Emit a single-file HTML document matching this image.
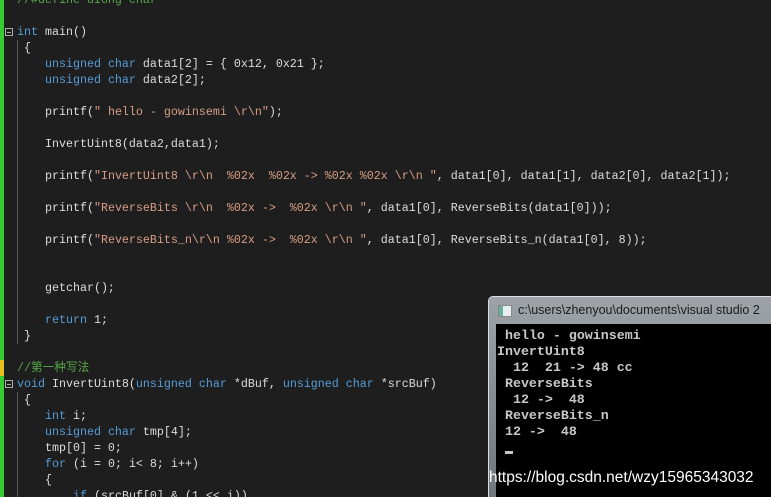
<!DOCTYPE html>
<html style="width:771px;height:497px;overflow:hidden"><head><meta charset="utf-8"><style>
html,body{overflow:hidden}
body{margin:0;width:771px;height:497px;overflow:hidden;background:#1e1e1e;position:relative;font-family:"Liberation Mono","Noto Sans CJK SC",monospace}
.l{position:absolute;left:17px;height:16px;line-height:16px;font-size:11.67px;color:#dcdcdc;white-space:pre}
.k{color:#569cd6}.s{color:#d69d85}.c{color:#57a64a}
#bar{position:absolute;left:0;top:0;width:4px;height:497px;background:#33cc33}
#guide{position:absolute;left:17px;top:40px;width:1px;height:304px;background:#555}
#guide2{position:absolute;left:17px;top:392px;width:1px;height:105px;background:#555}
.fold{position:absolute;left:5px;width:8px;height:8px;border:1px solid #aaa;box-sizing:border-box}
.fold:after{content:"";position:absolute;left:1px;top:3px;width:4px;height:1px;background:#aaa}
#con{position:absolute;left:488px;top:296px;width:283px;height:201px;background:linear-gradient(#9ea3a8,#6f767c);border:1px solid #ddd;border-right:0;border-bottom:0;border-radius:5px 0 0 0;box-sizing:border-box}
#title{position:absolute;left:518px;top:303px;font-family:"Liberation Sans",sans-serif;font-size:12.5px;color:#1a1a1a;white-space:nowrap}
#ic{position:absolute;left:498px;top:305px;width:12px;height:10px;background:#e8eef0;border:1px solid #888}
#ic:before{content:"";position:absolute;left:0;top:0;width:4px;height:10px;background:#6ab0a0}
#blk{position:absolute;left:496px;top:324px;width:275px;height:173px;background:#000}
.t{position:absolute;height:16px;line-height:16px;font-size:13.3px;font-weight:bold;color:#c8c8c8;white-space:pre}
#wm{position:absolute;left:489px;top:469px;font-family:"Liberation Sans",sans-serif;font-size:15.5px;color:#fff;white-space:nowrap}
</style></head><body>
<div id="bar"></div>
<div style="position:absolute;left:0;top:360px;width:4px;height:16px;background:#e8c020"></div>
<div id="guide"></div><div id="guide2"></div>
<div class="fold" style="top:28px"></div>
<div class="fold" style="top:380px"></div>
<div class="l c" style="top:-8px">//#define uIong char</div>
<div class="l" style="top:24px"><span class="k">int</span> main()</div>
<div class="l" style="top:40px"> {</div>
<div class="l" style="top:56px">    <span class="k">unsigned char</span> data1[2] = { 0x12, 0x21 };</div>
<div class="l" style="top:72px">    <span class="k">unsigned char</span> data2[2];</div>
<div class="l" style="top:104px">    printf(<span class="s">" hello - gowinsemi \r\n"</span>);</div>
<div class="l" style="top:136px">    InvertUint8(data2,data1);</div>
<div class="l" style="top:168px">    printf(<span class="s">"InvertUint8 \r\n  %02x  %02x -> %02x %02x \r\n "</span>, data1[0], data1[1], data2[0], data2[1]);</div>
<div class="l" style="top:200px">    printf(<span class="s">"ReverseBits \r\n  %02x ->  %02x \r\n "</span>, data1[0], ReverseBits(data1[0]));</div>
<div class="l" style="top:232px">    printf(<span class="s">"ReverseBits_n\r\n %02x ->  %02x \r\n "</span>, data1[0], ReverseBits_n(data1[0], 8));</div>
<div class="l" style="top:280px">    getchar();</div>
<div class="l" style="top:312px">    <span class="k">return</span> 1;</div>
<div class="l" style="top:328px"> }</div>
<div class="l c" style="top:360px">//第一种写法</div>
<div class="l" style="top:376px"><span class="k">void</span> InvertUint8(<span class="k">unsigned char</span> *dBuf, <span class="k">unsigned char</span> *srcBuf)</div>
<div class="l" style="top:392px"> {</div>
<div class="l" style="top:408px">    <span class="k">int</span> i;</div>
<div class="l" style="top:424px">    <span class="k">unsigned char</span> tmp[4];</div>
<div class="l" style="top:440px">    tmp[0] = 0;</div>
<div class="l" style="top:456px">    <span class="k">for</span> (i = 0; i&lt; 8; i++)</div>
<div class="l" style="top:472px">    {</div>
<div class="l" style="top:488px">        <span class="k">if</span> (srcBuf[0] &amp; (1 &lt;&lt; i))</div>
<div id="con"></div>
<div id="ic"></div>
<div id="title">c:\users\zhenyou\documents\visual studio 2</div>
<div id="blk"></div>
<div class="t" style="left:505px;top:328px">hello - gowinsemi</div>
<div class="t" style="left:497px;top:344px">InvertUint8</div>
<div class="t" style="left:497px;top:360px">  12  21 -&gt; 48 cc</div>
<div class="t" style="left:497px;top:376px"> ReverseBits</div>
<div class="t" style="left:497px;top:392px">  12 -&gt;  48</div>
<div class="t" style="left:497px;top:408px"> ReverseBits_n</div>
<div class="t" style="left:497px;top:424px"> 12 -&gt;  48</div>
<div style="position:absolute;left:505px;top:451px;width:8px;height:3px;background:#c8c8c8"></div>
<div id="wm">https://blog.csdn.net/wzy15965343032</div>
</body></html>
